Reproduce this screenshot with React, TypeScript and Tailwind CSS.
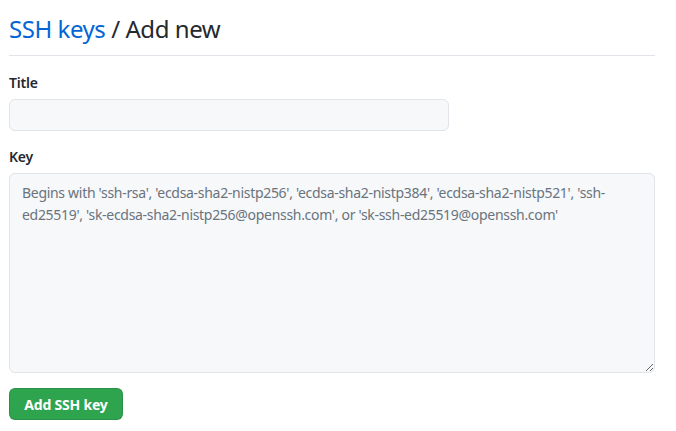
const App = () => {
  return (
    <div
      className="min-h-screen bg-white text-[#24292e] px-[9px]"
      style={{ fontFamily: '"Noto Sans", "Open Sans", sans-serif' }}
    >
      <div className="w-[646px]">
        {/* Heading */}
        <div className="pt-[12px] pb-[9px] border-b border-[#e1e4e8]">
          <h2 className="text-[24px] leading-[34px] font-normal tracking-[-0.45px]">
            <a href="#" className="text-[#0366d6]">
              SSH keys
            </a>{" "}
            / Add new
          </h2>
        </div>

        <form className="pt-[16px]">
          {/* Title */}
          <div className="mb-[15px]">
            <label className="block text-[14px] font-semibold leading-[21px] mb-[6px] tracking-[-0.2px]">Title</label>
            <input
              type="text"
              className="block w-[440px] h-[32px] rounded-[6px] border border-[#e1e4e8] bg-[#f6f8fa] px-[12px] text-[14px] outline-none"
            />
          </div>

          {/* Key */}
          <div className="mb-[15px]">
            <label className="block text-[14px] font-semibold leading-[21px] mb-[6px] tracking-[-0.2px]">Key</label>
            <textarea
              className="block w-full h-[200px] rounded-[6px] border border-[#e1e4e8] bg-[#f6f8fa] px-[12px] py-[8px] text-[14px] leading-[22px] tracking-[-0.3px] outline-none placeholder:text-[#6a737d]"
              placeholder="Begins with 'ssh-rsa', 'ecdsa-sha2-nistp256', 'ecdsa-sha2-nistp384', 'ecdsa-sha2-nistp521', 'ssh-ed25519', 'sk-ecdsa-sha2-nistp256@openssh.com', or 'sk-ssh-ed25519@openssh.com'"
            />
          </div>

          <button
            type="button"
            className="h-[32px] w-[114px] rounded-[6px] border border-[rgba(27,31,35,0.15)] bg-[#2ea44f] text-white text-[14px] font-bold tracking-[-0.2px]"
          >
            Add SSH key
          </button>
        </form>
      </div>
    </div>
  );
};

export default App;
